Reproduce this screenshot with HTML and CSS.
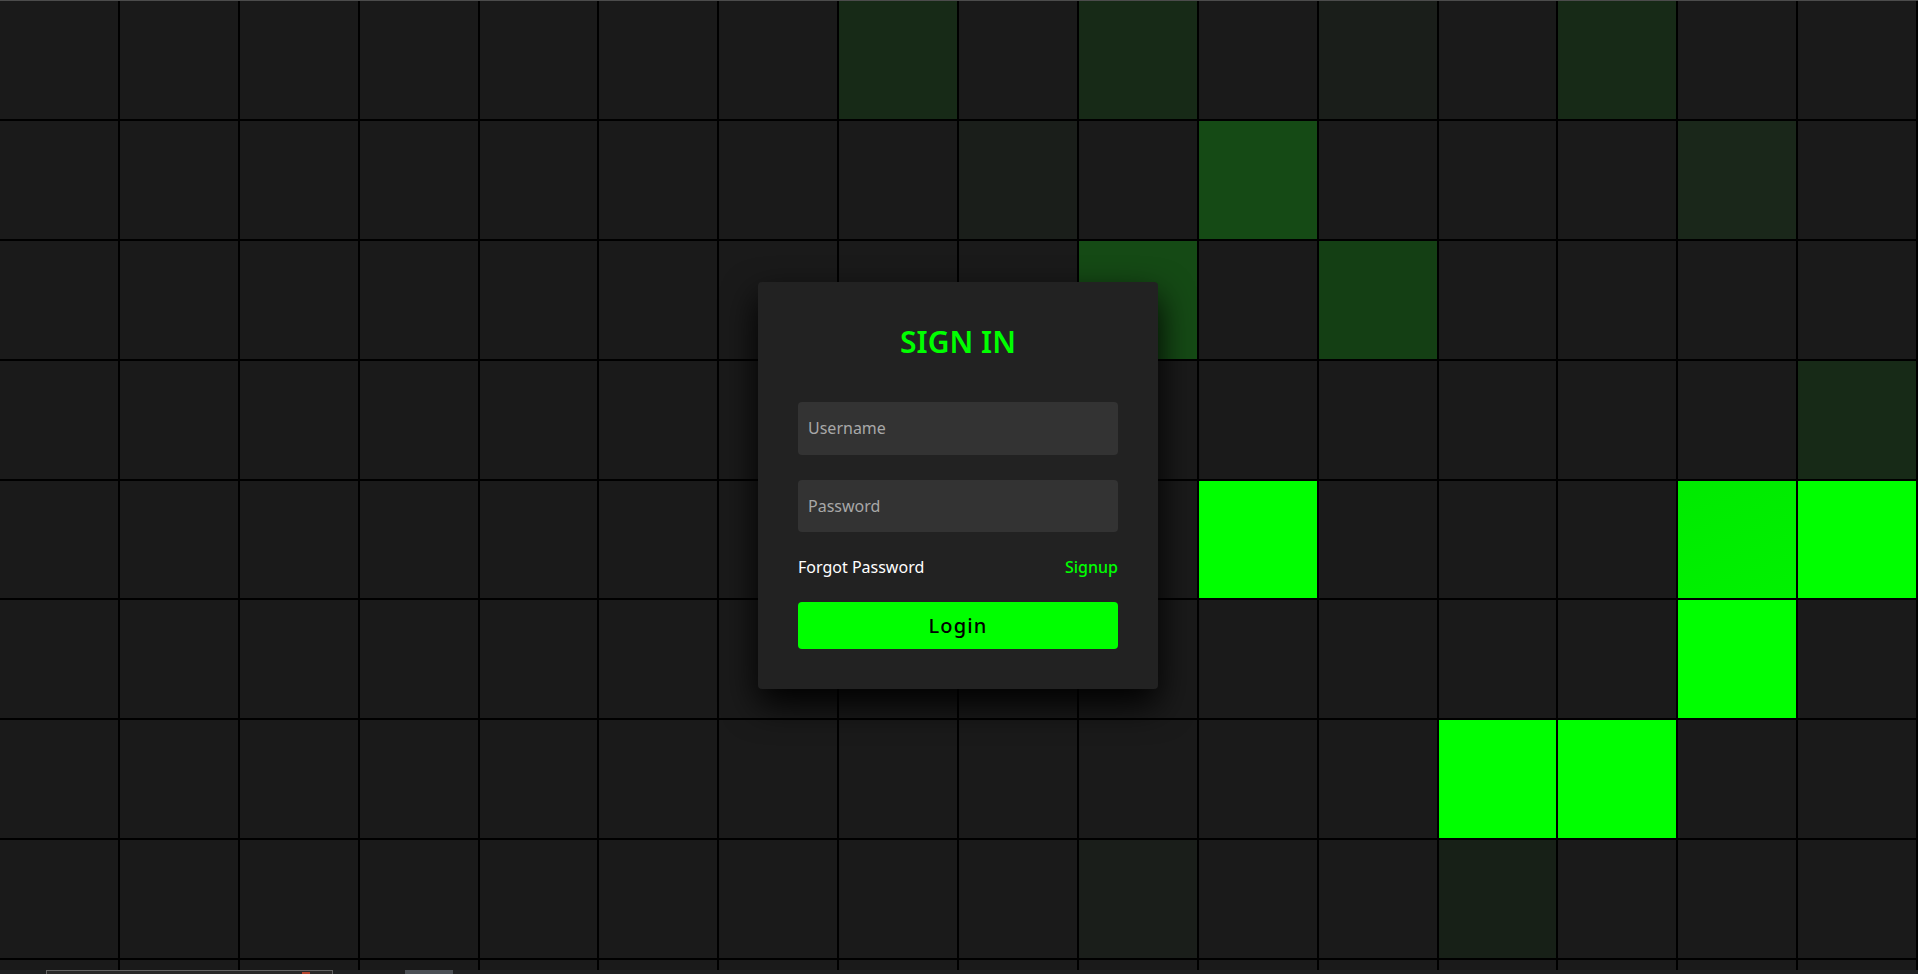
FILE: index.html
```html
<!DOCTYPE html>
<html lang="en">
<head>
<meta charset="utf-8">
<title>Sign In</title>
<link rel="stylesheet" href="styles.css">
</head>
<body>
<div class="topline"></div>
<main class="stage">
  <section class="tiles">
    <span></span><span></span><span></span><span></span><span></span><span></span><span></span><span class="g1"></span><span></span><span class="g1"></span><span></span><span class="g0"></span><span></span><span class="g1"></span><span></span><span></span>
    <span></span><span></span><span></span><span></span><span></span><span></span><span></span><span></span><span class="g0"></span><span></span><span class="g2"></span><span></span><span></span><span></span><span class="g0b"></span><span></span>
    <span></span><span></span><span></span><span></span><span></span><span></span><span></span><span></span><span></span><span class="g2"></span><span></span><span class="g3"></span><span></span><span></span><span></span><span></span>
    <span></span><span></span><span></span><span></span><span></span><span></span><span></span><span></span><span></span><span></span><span></span><span></span><span></span><span></span><span></span><span class="g1"></span>
    <span></span><span></span><span></span><span></span><span></span><span></span><span></span><span></span><span></span><span></span><span class="on"></span><span></span><span></span><span></span><span class="on2"></span><span class="on"></span>
    <span></span><span></span><span></span><span></span><span></span><span></span><span></span><span></span><span></span><span></span><span></span><span></span><span></span><span></span><span class="on"></span><span></span>
    <span></span><span></span><span></span><span></span><span></span><span></span><span></span><span></span><span></span><span></span><span></span><span></span><span class="on"></span><span class="on"></span><span></span><span></span>
    <span></span><span></span><span></span><span></span><span></span><span></span><span></span><span></span><span></span><span class="g0"></span><span></span><span></span><span class="g0c"></span><span></span><span></span><span></span>
    <span></span><span></span><span></span><span></span><span></span><span></span><span></span><span></span><span></span><span></span><span></span><span></span><span></span><span></span><span></span><span></span>
  </section>
  <div class="signin">
    <div class="content">
      <h2>Sign In</h2>
      <form class="form">
        <div class="inputBox"><input type="text" placeholder="Username"></div>
        <div class="inputBox"><input type="password" placeholder="Password"></div>
        <div class="links"><a href="#">Forgot Password</a><a href="#" class="signup">Signup</a></div>
        <div class="inputBox"><input type="submit" value="Login"></div>
      </form>
    </div>
  </div>
</main>
<div class="bottombar">
  <div class="bb-gap1"></div>
  <div class="bb-box"><div class="bb-red"></div></div>
  <div class="bb-gap2"></div>
  <div class="bb-thumb"></div>
</div>
</body>
</html>
```
FILE: styles.css
```css
* {
  margin: 0;
  padding: 0;
  box-sizing: border-box;
}

html, body {
  height: 100%;
}

body {
  background: #000;
  display: flex;
  flex-direction: column;
  overflow: hidden;
  font-family: "Noto Sans", "Lato", sans-serif;
}

.topline {
  height: 1px;
  flex: none;
  background: #4c4c4c;
}

.stage {
  flex: 1;
  min-height: 0;
  display: grid;
  grid-template-columns: minmax(0, 1fr);
  grid-template-rows: minmax(0, 1fr);
  overflow: hidden;
}

.tiles {
  grid-area: 1 / 1;
  display: flex;
  flex-wrap: wrap;
  align-content: flex-start;
  gap: 2px;
  overflow: hidden;
}

.tiles span {
  display: block;
  width: calc(6.25vw - 2px);
  height: calc(6.25vw - 2px);
  background: #1a1a1a;
}

.tiles span.g0 { background: #1a1e1a; }
.tiles span.g0b { background: #1a271a; }
.tiles span.g0c { background: #172017; }
.tiles span.g1 { background: #172a17; }
.tiles span.g2 { background: #154a15; }
.tiles span.g3 { background: #143f14; }
.tiles span.on { background: #00ff00; }
.tiles span.on2 { background: linear-gradient(160deg, #00ea00, #00f200); }

.signin {
  grid-area: 1 / 1;
  place-self: center;
  margin-right: 2px;
  width: 400px;
  background: #222;
  padding: 40px;
  border-radius: 4px;
  box-shadow: 0 15px 35px rgba(0, 0, 0, 1);
  position: relative;
  z-index: 10;
}

.content {
  display: flex;
  flex-direction: column;
  align-items: center;
  gap: 40px;
}

.content h2 {
  font-size: 30px;
  line-height: 40px;
  font-weight: 600;
  color: #0f0;
  text-transform: uppercase;
}

.form {
  width: 100%;
  display: flex;
  flex-direction: column;
  gap: 25px;
}

.inputBox input {
  display: block;
  width: 100%;
  background: #333;
  border: none;
  outline: none;
  border-radius: 4px;
  padding: 16px 10px 16.5px;
  font-family: "Noto Sans", "Lato", sans-serif;
  font-size: 16px;
  line-height: 20px;
  color: #fff;
}

.inputBox input::placeholder {
  color: #a8a8a8;
}

.links {
  display: flex;
  justify-content: space-between;
  font-size: 16px;
  line-height: 20px;
}

.links a {
  color: #fff;
  text-decoration: none;
}

.links a.signup {
  color: #0f0;
  font-weight: 500;
}

.inputBox input[type="submit"] {
  padding: 10px;
  background: #0f0;
  color: #000;
  font-size: 20px;
  line-height: 27px;
  font-weight: 500;
  letter-spacing: 0.06em;
  cursor: pointer;
}

.bottombar {
  height: 4px;
  flex: none;
  display: flex;
  background: #1f2123;
}

.bb-gap1 { width: 46px; }
.bb-box {
  width: 287px;
  border: 1px solid #646464;
  border-bottom: none;
  background: #2a2a2a;
  position: relative;
}
.bb-red {
  position: absolute;
  left: 255px;
  top: 1px;
  width: 8px;
  height: 3px;
  background: #b5452e;
}
.bb-gap2 { width: 72px; }
.bb-thumb {
  width: 48px;
  background: #4b5056;
}
```
